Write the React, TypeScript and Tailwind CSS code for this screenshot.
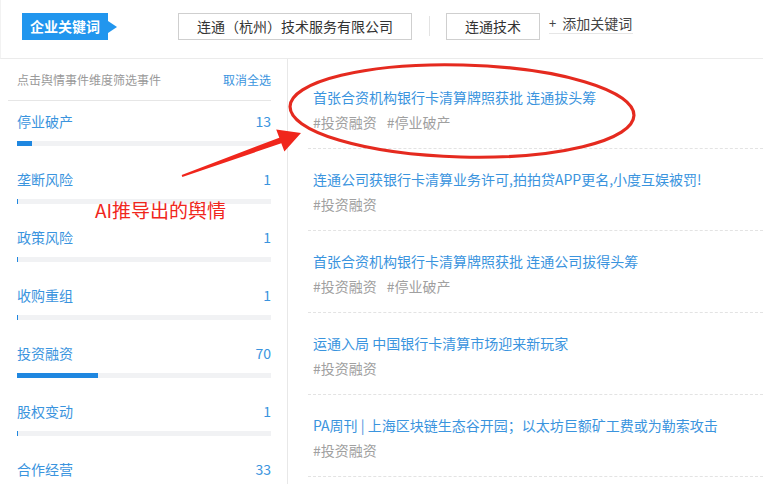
const filters = [
  { name: '停业破产', count: 13 },
  { name: '垄断风险', count: 1 },
  { name: '政策风险', count: 1 },
  { name: '收购重组', count: 1 },
  { name: '投资融资', count: 70 },
  { name: '股权变动', count: 1 },
  { name: '合作经营', count: 33 },
];

const news = [
  { title: '首张合资机构银行卡清算牌照获批 连通拔头筹', tags: ['投资融资', '停业破产'] },
  { title: '连通公司获银行卡清算业务许可,拍拍贷APP更名,小度互娱被罚!', tags: ['投资融资'] },
  { title: '首张合资机构银行卡清算牌照获批 连通公司拔得头筹', tags: ['投资融资', '停业破产'] },
  { title: '运通入局 中国银行卡清算市场迎来新玩家', tags: ['投资融资'] },
  { title: 'PA周刊 | 上海区块链生态谷开园；以太坊巨额矿工费或为勒索攻击', tags: ['投资融资'] },
];

function App() {
  return (
    <div
      className="relative w-[763px] h-[484px] overflow-hidden bg-white"
      style={{ fontFamily: '"Noto Sans CJK SC", "Microsoft YaHei", sans-serif' }}
    >
      {/* keyword header */}
      <div className="h-[59px] border-b border-[#ebebeb] border-l border-l-[#f2f2f2] flex items-start pt-[13px] pl-[21px]">
        <div className="relative h-[27px] w-[86px] bg-[#2196ee] text-white font-bold text-[14px] flex items-center justify-center">
          企业关键词
          <span className="absolute -right-[9px] top-[8px] w-0 h-0 border-y-[6px] border-y-transparent border-l-[9px] border-l-[#2196ee]" />
        </div>
        <div className="ml-[70px] h-[27px] px-[18px] border border-[#cfcfcf] text-[14px] text-[#333] flex items-center">
          连通（杭州）技术服务有限公司
        </div>
        <div className="ml-[17px] mt-[3px] h-[20px] w-px bg-[#e3e3e3]" />
        <div className="ml-[16px] h-[27px] px-[18px] border border-[#cfcfcf] text-[14px] text-[#333] flex items-center">
          连通技术
        </div>
        <div className="ml-[9px] h-[21px] border-b border-[#e6e6e6] text-[14px] text-[#444] flex items-center gap-[6px] pr-[1px]">
          <span className="text-[13px]">+</span>
          <span>添加关键词</span>
        </div>
      </div>

      <div className="flex">
        {/* filter column */}
        <div className="w-[288px] h-[425px] border-r border-[#e8e8e8]">
          <div className="ml-[8px] w-[263px]">
            <div className="h-[42px] border-b border-[#e6e6e6] pl-[9px] flex items-center justify-between text-[12px]">
              <span className="text-[#9a9a9a]">点击舆情事件维度筛选事件</span>
              <span className="text-[#3a94de]">取消全选</span>
            </div>
            {filters.map((f) => (
              <div key={f.name} className="pl-[9px] pt-[10px] h-[58px]">
                <div className="h-[20px] flex items-center justify-between text-[14px] text-[#3a94de]">
                  <span>{f.name}</span>
                  <span>{f.count}</span>
                </div>
                <div className="mt-[10px] h-[5px] bg-[#f1f2f4]">
                  <div className="h-full bg-[#1f87e0]" style={{ width: `${(f.count / 219) * 100}%` }} />
                </div>
              </div>
            ))}
          </div>
        </div>

        {/* news list */}
        <div className="flex-1 pt-[8px]">
          {news.map((n, i) => (
            <div key={i} className="ml-[20px] pl-[5px] pt-[20px] pb-[16px] border-b border-dashed border-[#e3e3e3]">
              <div className="h-[20px] flex items-center text-[14px] text-[#3a94de] whitespace-nowrap">{n.title}</div>
              <div className="mt-[5px] h-[20px] flex items-center gap-[10px] text-[14px] text-[#a0a0a0]">
                {n.tags.map((t) => (
                  <span key={t}>#{t}</span>
                ))}
              </div>
            </div>
          ))}
        </div>
      </div>

      {/* annotation overlay */}
      <svg className="absolute inset-0 pointer-events-none" width="763" height="484" viewBox="0 0 763 484">
        <ellipse cx="462" cy="111" rx="172" ry="46" fill="none" stroke="#e52a1f" strokeWidth="3.2" transform="rotate(1.5 462 111)" />
        <polygon points="181.7,175 279.3,137.7 276.2,129.5 301,133 284.4,151.5 281.3,143.3 182.3,177" fill="#f0261c" />
      </svg>
      <div className="absolute left-[95px] top-[197px] text-[19px] leading-[26px] text-[#f0261c] whitespace-nowrap">
        AI推导出的舆情
      </div>
    </div>
  );
}

export default App;
